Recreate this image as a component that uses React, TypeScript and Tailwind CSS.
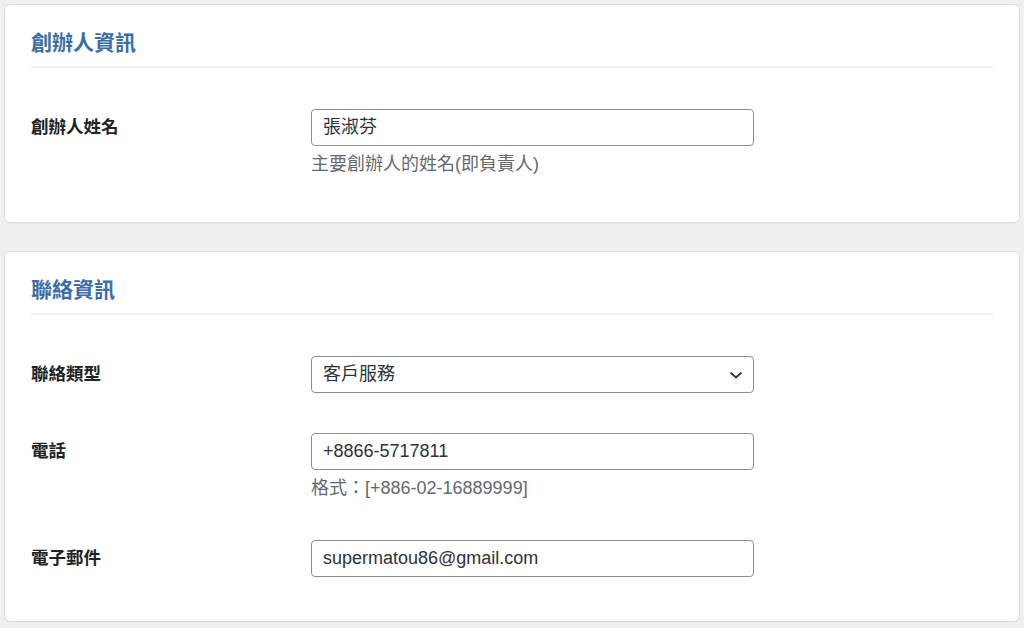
const font = { fontFamily: '"Liberation Sans", "Noto Sans CJK TC", sans-serif' }

const Card = ({ title, children }: { title: string; children: React.ReactNode }) => (
  <div className="bg-white border border-[#dcdcde] rounded-[6px] px-[26px] shadow-[0_1px_1px_rgba(0,0,0,0.03)]">
    <div className="pt-[24px] pb-[9px] border-b-2 border-[#f0f0f1]">
      <h2 className="text-[21px] leading-[28px] font-bold text-[#3a6ea8]">{title}</h2>
    </div>
    {children}
  </div>
)

const Row = ({ label, children, hint, className }: { label: string; children: React.ReactNode; hint?: string; className?: string }) => (
  <div className={className}>
    <div className="flex items-center">
      <div className="w-[280px] shrink-0 text-[17.5px] font-bold text-[#1d2327]">{label}</div>
      {children}
    </div>
    {hint && <div className="ml-[280px] mt-[6px] text-[18px] leading-[24px] text-[#646970]">{hint}</div>}
  </div>
)

const Field = ({ value }: { value: string }) => (
  <div className="w-[443px] h-[37px] border border-[#8c8f94] rounded-[4px] px-[11px] flex items-center text-[18px] text-[#2c3338]">
    {value}
  </div>
)

export default function App() {
  return (
    <div style={font} className="min-h-screen bg-[#f0f0f1] px-[4px] pt-[4px]">
      <Card title="創辦人資訊">
        <Row className="mt-[41px] pb-[46px]" label="創辦人姓名" hint="主要創辦人的姓名(即負責人)">
          <Field value="張淑芬" />
        </Row>
      </Card>
      <div className="mt-[28px]">
        <Card title="聯絡資訊">
          <Row className="mt-[41px]" label="聯絡類型">
            <div className="w-[443px] h-[37px] border border-[#8c8f94] rounded-[4px] pl-[11px] pr-[10px] flex items-center justify-between text-[18px] text-[#2c3338]">
              <span>客戶服務</span>
              <svg width="14" height="14" viewBox="0 0 14 14" fill="none">
                <path d="M2 5l5 4.5L12 5" stroke="#2c3338" strokeWidth="1.7" strokeLinecap="round" strokeLinejoin="round" />
              </svg>
            </div>
          </Row>
          <Row className="mt-[40px]" label="電話" hint="格式：[+886-02-16889999]">
            <Field value="+8866-5717811" />
          </Row>
          <Row className="mt-[40px] pb-[44px]" label="電子郵件">
            <Field value="supermatou86@gmail.com" />
          </Row>
        </Card>
      </div>
    </div>
  )
}
